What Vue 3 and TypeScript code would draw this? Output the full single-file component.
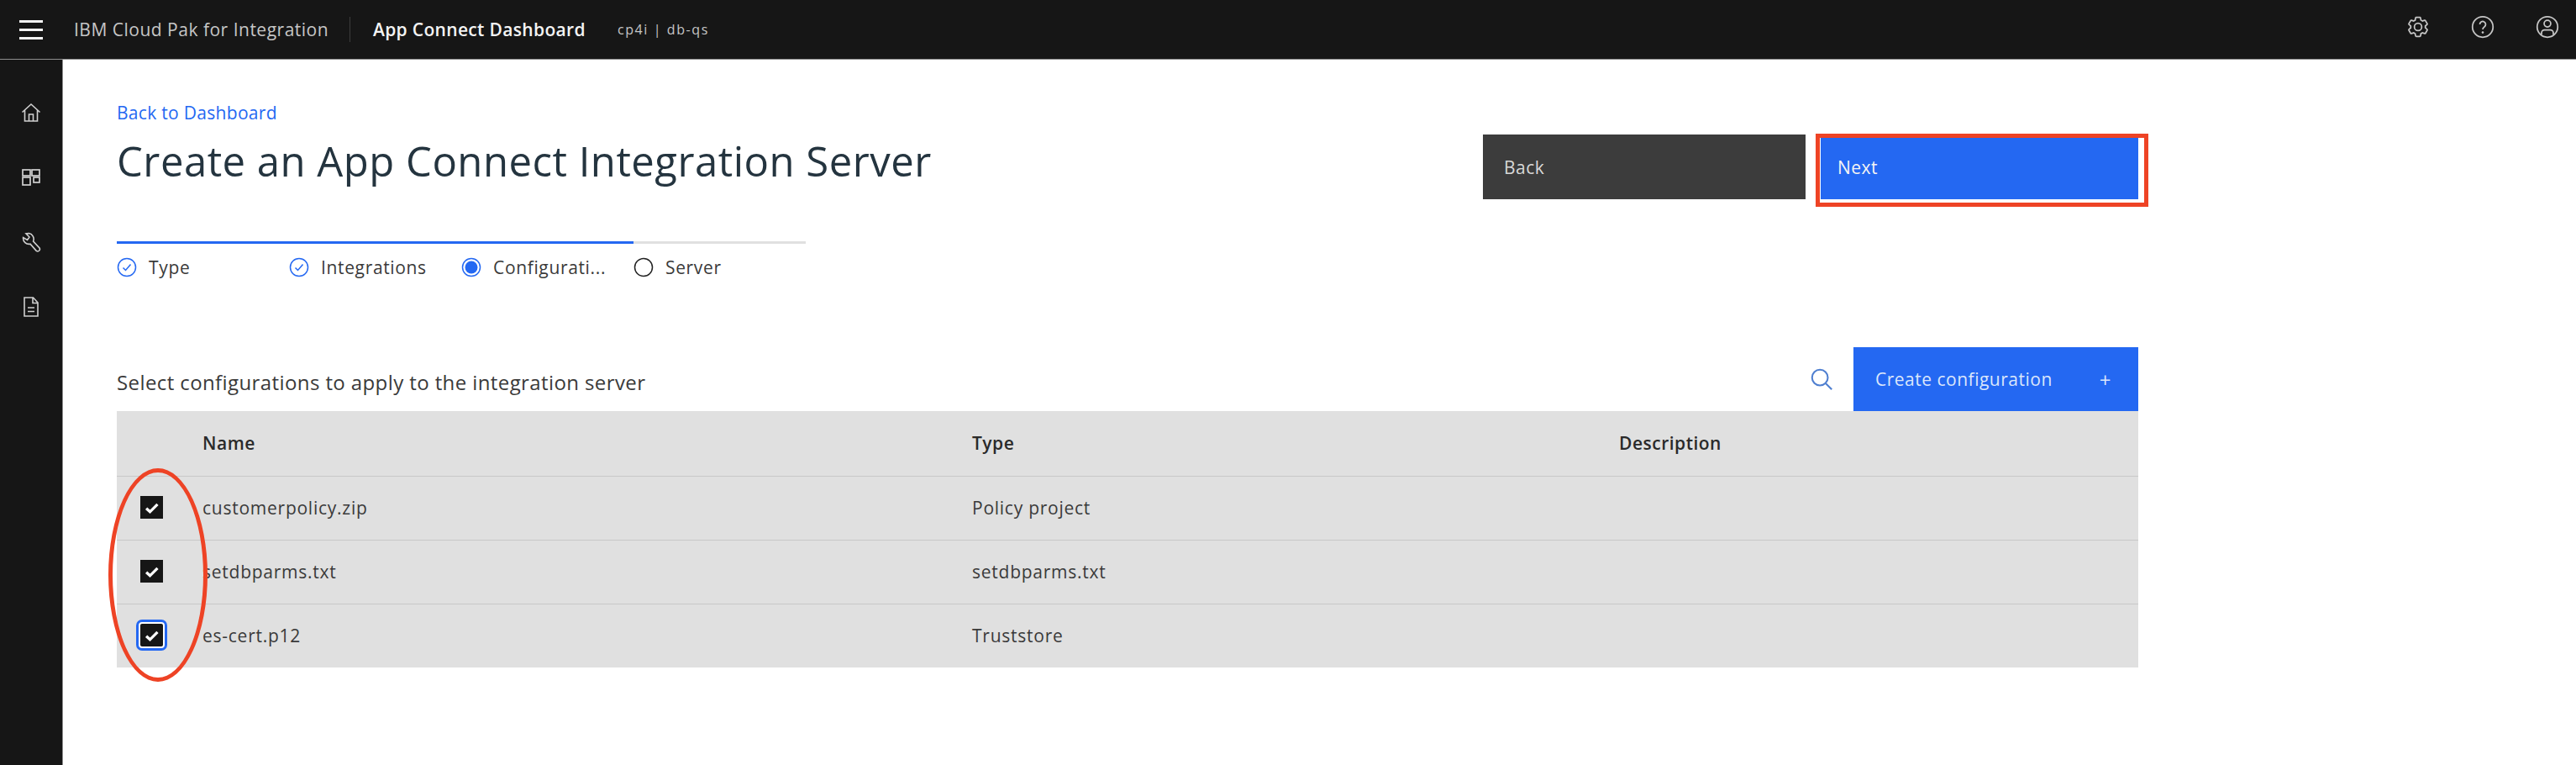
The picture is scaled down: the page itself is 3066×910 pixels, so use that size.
<script setup lang="ts">
interface Row {
  name: string
  type: string
  focused?: boolean
}

const steps = [
  { label: 'Type', state: 'done' },
  { label: 'Integrations', state: 'done' },
  { label: 'Configurati...', state: 'current' },
  { label: 'Server', state: 'todo' },
]

const rows: Row[] = [
  { name: 'customerpolicy.zip', type: 'Policy project' },
  { name: 'setdbparms.txt', type: 'setdbparms.txt' },
  { name: 'es-cert.p12', type: 'Truststore', focused: true },
]
</script>

<template>
  <div class="page">
    <header class="topbar">
      <div class="burger"><span /><span /><span /></div>
      <span class="brand">IBM Cloud Pak for Integration</span>
      <span class="product">App Connect Dashboard</span>
      <span class="instance">cp4i | db-qs</span>
      <div class="top-icons">
        <svg viewBox="0 0 32 32" fill="currentColor">
          <path d="M27,16.76c0-.25,0-.5,0-.76s0-.51,0-.77l1.92-1.68A2,2,0,0,0,29.3,11L26.94,7a2,2,0,0,0-1.73-1,2,2,0,0,0-.64.1l-2.43.82a11.35,11.35,0,0,0-1.31-.75l-.51-2.52a2,2,0,0,0-2-1.61H13.64a2,2,0,0,0-2,1.61l-.51,2.52a11.48,11.48,0,0,0-1.32.75L7.43,6.06A2,2,0,0,0,6.79,6,2,2,0,0,0,5.06,7L2.7,11a2,2,0,0,0,.41,2.51L5,15.24c0,.25,0,.5,0,.76s0,.51,0,.77L3.11,18.45A2,2,0,0,0,2.7,21L5.06,25a2,2,0,0,0,1.73,1,2,2,0,0,0,.64-.1l2.43-.82a11.35,11.35,0,0,0,1.31.75l.51,2.52a2,2,0,0,0,2,1.61h4.72a2,2,0,0,0,2-1.61l.51-2.52a11.48,11.48,0,0,0,1.32-.75l2.42.82a2,2,0,0,0,.64.1,2,2,0,0,0,1.73-1L29.3,21a2,2,0,0,0-.41-2.51ZM25.21,24l-3.43-1.16a8.86,8.86,0,0,1-2.71,1.57L18.36,28H13.64l-.71-3.55a9.36,9.36,0,0,1-2.7-1.57L6.79,24,4.43,20l2.72-2.4a8.9,8.9,0,0,1,0-3.13L4.43,12,6.79,8l3.43,1.16a8.86,8.86,0,0,1,2.71-1.57L13.64,4h4.72l.71,3.55a9.36,9.36,0,0,1,2.7,1.57L25.21,8,27.57,12l-2.72,2.4a8.9,8.9,0,0,1,0,3.13L27.57,20Z" />
          <path d="M16,22a6,6,0,1,1,6-6A5.94,5.94,0,0,1,16,22Zm0-10a3.91,3.91,0,0,0-4,4,3.91,3.91,0,0,0,4,4,3.91,3.91,0,0,0,4-4A3.91,3.91,0,0,0,16,12Z" />
        </svg>
        <svg viewBox="0 0 32 32" fill="none" stroke="currentColor" stroke-width="2">
          <circle cx="16" cy="16" r="14" />
          <path d="M12 12.6a4 4 0 1 1 6.2 3.3c-1.5 1-2.2 1.8-2.2 3.6" />
          <circle cx="16" cy="23.5" r="1.5" fill="currentColor" stroke="none" />
        </svg>
        <svg viewBox="0 0 32 32" fill="none" stroke="currentColor" stroke-width="2">
          <circle cx="16" cy="16" r="14" />
          <circle cx="16" cy="11.5" r="4.5" />
          <path d="M8 26.5V24a4 4 0 0 1 4-4h8a4 4 0 0 1 4 4v2.5" />
        </svg>
      </div>
    </header>

    <div class="body">
      <nav class="sidebar">
        <div class="nav-item">
          <svg viewBox="0 0 24 24" fill="none" stroke="currentColor" stroke-width="1.6">
            <path d="M1.5 11.5 12 2l10.5 9.5M4.5 9v13h15V9M9.5 22v-8h5v8" />
          </svg>
        </div>
        <div class="nav-item">
          <svg viewBox="0 0 24 24" fill="none" stroke="currentColor" stroke-width="1.7">
            <rect x="2" y="3" width="9" height="7" />
            <rect x="13" y="3" width="9" height="7" />
            <rect x="2" y="12" width="9" height="9" />
            <rect x="15" y="12" width="7" height="6" />
          </svg>
        </div>
        <div class="nav-item">
          <svg viewBox="0 0 24 24" fill="none" stroke="currentColor" stroke-width="1.6">
            <path d="M9.5 1.5 6 1.8 10 6 7.5 9.5 2.6 6.6a7 7 0 0 0 8.4 7.6l7.2 8.2a2.6 2.6 0 0 0 3.8-3.4L14.6 11A7 7 0 0 0 9.5 1.5z" />
          </svg>
        </div>
        <div class="nav-item">
          <svg viewBox="0 0 24 24" fill="none" stroke="currentColor" stroke-width="1.6">
            <path d="M4 1h10.5L20 7v16H4zM14 1v6.5h6M8 13h8M8 17.5h8" />
          </svg>
        </div>
      </nav>

      <main class="main">
        <div class="head">
          <div class="head-left">
            <a class="back-link">Back to Dashboard</a>
            <h1 class="title">Create an App Connect Integration Server</h1>
            <ol class="steps">
              <li v-for="s in steps" :key="s.label" class="step" :class="'step-' + s.state">
                <svg v-if="s.state === 'done'" viewBox="0 0 24 24" fill="none" stroke="#2468f2" stroke-width="1.5">
                  <circle cx="12" cy="12" r="10.5" />
                  <path d="m7.5 12.5 3 3 6-7" />
                </svg>
                <svg v-else-if="s.state === 'current'" viewBox="0 0 24 24" fill="none" stroke="#2468f2" stroke-width="1.5">
                  <circle cx="12" cy="12" r="10.5" />
                  <circle cx="12" cy="12" r="7.5" fill="#2468f2" stroke="none" />
                </svg>
                <svg v-else viewBox="0 0 24 24" fill="none" stroke="#222" stroke-width="1.5">
                  <circle cx="12" cy="12" r="10.5" />
                </svg>
                <span>{{ s.label }}</span>
              </li>
            </ol>
          </div>
          <div class="actions">
            <button class="btn btn-back">Back</button>
            <div class="next-wrap">
              <button class="btn btn-next">Next</button>
              <div class="red-box" />
            </div>
          </div>
        </div>

        <div class="toolbar">
          <span class="table-title">Select configurations to apply to the integration server</span>
          <svg class="search" viewBox="0 0 32 32" fill="none" stroke="#4f7fd0" stroke-width="2.2">
            <circle cx="14" cy="14" r="10" />
            <path d="m21.5 21.5 7.5 7.5" />
          </svg>
          <button class="btn-create">
            <span>Create configuration</span>
            <span class="plus">+</span>
          </button>
        </div>

        <div class="table">
          <div class="row row-head">
            <div class="cell-check" />
            <div class="cell">Name</div>
            <div class="cell">Type</div>
            <div class="cell">Description</div>
          </div>
          <div v-for="r in rows" :key="r.name" class="row">
            <div class="cell-check">
              <span class="checkbox" :class="{ focused: r.focused }">
                <svg viewBox="0 0 16 16" fill="none" stroke="#fff" stroke-width="2.4">
                  <path d="m3 8.5 3.2 3 6.5-6.5" />
                </svg>
              </span>
            </div>
            <div class="cell">{{ r.name }}</div>
            <div class="cell">{{ r.type }}</div>
            <div class="cell" />
          </div>
          <div class="red-ellipse" />
        </div>
      </main>
    </div>
  </div>
</template>

<style>
html,
body {
  margin: 0;
  background: #fff;
}
</style>

<style scoped>
.page {
  width: 3066px;
  height: 910px;
  display: flex;
  flex-direction: column;
  overflow: hidden;
  font-family: "Open Sans", "Liberation Sans", sans-serif;
  font-size: 21px;
  letter-spacing: 0.5px;
  color: #3a3a3a;
}

.topbar {
  height: 70px;
  flex: none;
  display: flex;
  align-items: center;
  background: #161616;
  border-bottom: 1px solid #8d8d8d;
  box-sizing: content-box;
  color: #e0e0e0;
}
.burger {
  width: 28px;
  margin-left: 23px;
  display: flex;
  flex-direction: column;
  gap: 7px;
}
.burger span {
  height: 3px;
  background: #f4f4f4;
}
.brand {
  margin-left: 37px;
  width: 328px;
  height: 30px;
  line-height: 30px;
  border-right: 1px solid #3d3d3d;
  color: #c6c6c6;
}
.product {
  margin-left: 27px;
  font-weight: 600;
  letter-spacing: 0.33px;
  color: #f4f4f4;
}
.instance {
  margin-left: 38px;
  font-size: 16px;
  letter-spacing: 1.6px;
  color: #c6c6c6;
}
.top-icons {
  margin-left: auto;
  margin-right: 20px;
  display: flex;
  gap: 49px;
  margin-top: -6px;
  color: #c6c6c6;
}
.top-icons svg {
  width: 28px;
  height: 28px;
}

.body {
  flex: 1;
  display: flex;
  min-height: 0;
}
.sidebar {
  width: 74px;
  flex: none;
  background: #161616;
  border-right: 1px solid #8d8d8d;
  padding-top: 24px;
  color: #d0d0d0;
}
.nav-item {
  height: 77px;
  display: flex;
  align-items: center;
  justify-content: center;
}
.nav-item svg {
  width: 24px;
  height: 24px;
}

.main {
  flex: 1;
  padding: 51px 0 0 64px;
  min-width: 0;
}
.head {
  width: 2406px;
  height: 291px;
  display: flex;
  justify-content: space-between;
}
.back-link {
  display: block;
  height: 24px;
  line-height: 24px;
  letter-spacing: 0.3px;
  color: #2468f2;
}
.title {
  margin: 15px 0 0;
  height: 60px;
  line-height: 60px;
  font-size: 49px;
  font-weight: 400;
  letter-spacing: 0.5px;
  color: #24343f;
}
.steps {
  list-style: none;
  margin: 66px 0 0;
  padding: 0;
  width: 820px;
  display: grid;
  grid-template-columns: repeat(4, 205px);
  letter-spacing: 0.65px;
}
.step {
  height: 56px;
  display: flex;
  align-items: center;
  gap: 14px;
  border-top: 3px solid #2468f2;
  padding-bottom: 2px;
  color: #3a3a3a;
}
.step-todo {
  border-top-color: #e0e0e0;
}
.step svg {
  width: 24px;
  height: 24px;
  flex: none;
}

.actions {
  margin-top: 38px;
  display: flex;
  gap: 18px;
}
.btn {
  display: block;
  height: 77px;
  border: 0;
  padding: 0 0 0 25px;
  text-align: left;
  font: inherit;
  letter-spacing: inherit;
  color: #f4f4f4;
}
.btn-back {
  width: 384px;
  background: #3c3c3c;
  color: #d8d8d8;
}
.next-wrap {
  position: relative;
}
.btn-next {
  width: 378px;
  padding-left: 20px;
  background: #2468f2;
}
.red-box {
  position: absolute;
  left: -6px;
  top: -1px;
  width: 396px;
  height: 87px;
  box-sizing: border-box;
  border: 5px solid #ee4325;
}

.toolbar {
  width: 2406px;
  height: 76px;
  display: flex;
  align-items: center;
}
.table-title {
  font-size: 24px;
  letter-spacing: 0.4px;
  color: #3a3a3a;
  margin-top: 6px;
}
.search {
  width: 30px;
  height: 30px;
  margin-left: auto;
  margin-right: 23px;
}
.btn-create {
  width: 339px;
  height: 76px;
  border: 0;
  padding: 0 32px 0 26px;
  display: flex;
  align-items: center;
  justify-content: space-between;
  background: #2468f2;
  color: #dbe6fb;
  font: inherit;
  letter-spacing: inherit;
}
.plus {
  font-size: 24px;
}

.table {
  position: relative;
  width: 2406px;
  background: #e0e0e0;
  letter-spacing: 0.75px;
}
.row {
  height: 76px;
  padding-bottom: 2px;
  display: grid;
  grid-template-columns: 102px 916px 770px 1fr;
  align-items: center;
  border-top: 1px solid #c8c8c8;
  box-sizing: border-box;
}
.row-head {
  height: 77px;
  border-top: 0;
  font-weight: 600;
  letter-spacing: 0.5px;
  color: #2a2a2a;
}
.cell-check {
  display: flex;
  padding-left: 28px;
}
.checkbox {
  width: 27px;
  height: 27px;
  display: flex;
  align-items: center;
  justify-content: center;
  background: #161616;
}
.checkbox svg {
  width: 22px;
  height: 22px;
}
.checkbox.focused {
  outline: 3px solid #2468f2;
  outline-offset: 2px;
  box-shadow: 0 0 0 2px #fff;
  border-radius: 2px;
}
.red-ellipse {
  position: absolute;
  left: -10px;
  top: 68px;
  width: 118px;
  height: 254px;
  box-sizing: border-box;
  border: 5px solid #ee4325;
  border-radius: 50%;
}
</style>
